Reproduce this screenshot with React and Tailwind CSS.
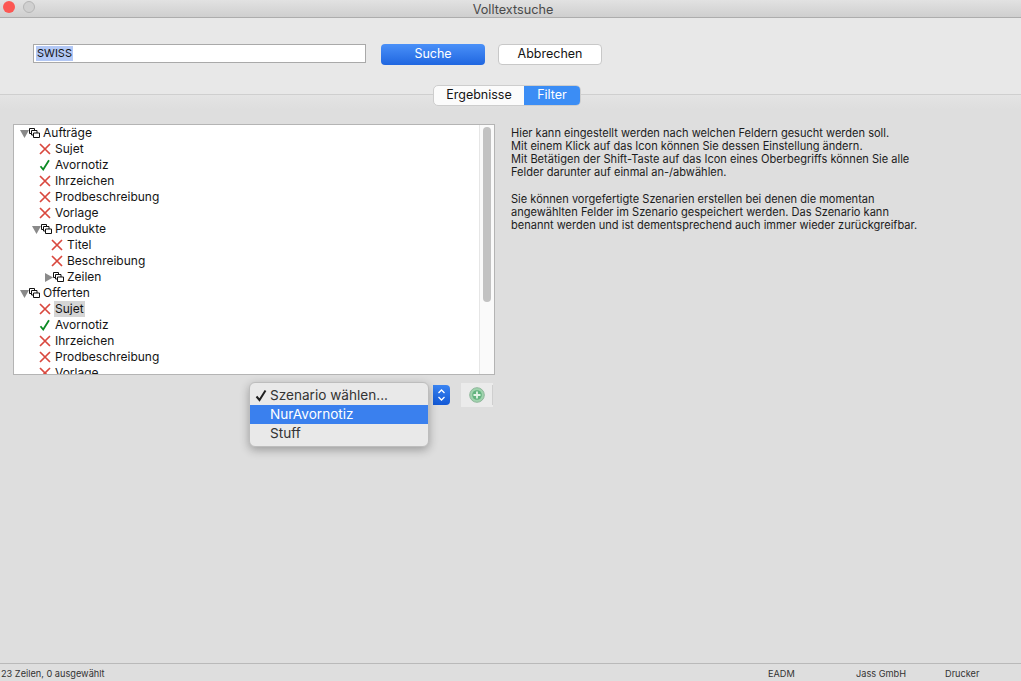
import React from "react";

const FONT = { fontFamily: "Inter, 'Liberation Sans', sans-serif" };

const TREE = [
  { label: "Aufträge", level: 0, kind: "open" },
  { label: "Sujet", level: 1, kind: "x" },
  { label: "Avornotiz", level: 1, kind: "check" },
  { label: "Ihrzeichen", level: 1, kind: "x" },
  { label: "Prodbeschreibung", level: 1, kind: "x" },
  { label: "Vorlage", level: 1, kind: "x" },
  { label: "Produkte", level: 1, kind: "open" },
  { label: "Titel", level: 2, kind: "x" },
  { label: "Beschreibung", level: 2, kind: "x" },
  { label: "Zeilen", level: 2, kind: "closed" },
  { label: "Offerten", level: 0, kind: "open" },
  { label: "Sujet", level: 1, kind: "x", selected: true },
  { label: "Avornotiz", level: 1, kind: "check" },
  { label: "Ihrzeichen", level: 1, kind: "x" },
  { label: "Prodbeschreibung", level: 1, kind: "x" },
  { label: "Vorlage", level: 1, kind: "x" },
];

function CrossIcon() {
  return (
    <svg width="12" height="12" viewBox="0 0 12 12" className="shrink-0">
      <path d="M1 1 L11 11 M11 1 L1 11" stroke="#d9483e" strokeWidth="1.7" fill="none" />
    </svg>
  );
}

function CheckIcon() {
  return (
    <svg width="12" height="12" viewBox="0 0 12 12" className="shrink-0">
      <path d="M1.5 7.2 L4.2 10.5 L10 1.2" stroke="#0b8a22" strokeWidth="1.8" fill="none" />
    </svg>
  );
}

function GroupIcon() {
  return (
    <svg width="11" height="10" viewBox="0 0 11 10" className="shrink-0">
      <path d="M0.5 0.5 H5.5 V2.5 M0.5 0.5 V5.5 H2.5 M2.5 2.5 H8 V5 M2.5 2.5 V7 H4.5 M4.5 5 H10.5 V9.5 H4.5 Z" stroke="#111" strokeWidth="1" fill="none" />
    </svg>
  );
}

function Arrow({ open }) {
  return (
    <svg width="9" height="9" viewBox="0 0 9 9" className="shrink-0">
      {open ? <path d="M0 1 H9 L4.5 9 Z" fill="#8a8a8a" /> : <path d="M1 0 V9 L9 4.5 Z" fill="#8a8a8a" />}
    </svg>
  );
}

function TreeRow({ row }) {
  const isGroup = row.kind === "open" || row.kind === "closed";
  // indent: 12px per level
  const indent = ["pl-[6px]", "pl-[18px]", "pl-[30px]"][row.level];
  return (
    <div className={`flex h-4 shrink-0 items-center ${indent}`}>
      {isGroup ? (
        <>
          <Arrow open={row.kind === "open"} />
          <GroupIcon />
          <span className="ml-[3px]">{row.label}</span>
        </>
      ) : (
        <>
          <span className="ml-[7px] flex w-3 justify-center">
            {row.kind === "x" ? <CrossIcon /> : <CheckIcon />}
          </span>
          <span className={`ml-[3px] h-4 px-px leading-4 ${row.selected ? "bg-[#d5d5d5]" : ""}`}>{row.label}</span>
        </>
      )}
    </div>
  );
}

export default function App() {
  return (
    <div className="relative flex h-[681px] w-[1021px] flex-col overflow-hidden bg-[#dedede] text-[#141414]" style={FONT}>
      {/* title bar */}
      <div className="grid h-[18px] shrink-0 grid-cols-[1fr_auto_1fr] items-center border-b border-[#adadad] bg-gradient-to-b from-[#e2e2e2] to-[#cfcfcf] pl-[3px]">
        <div className="flex gap-2 self-start pt-px">
          <span className="h-3 w-3 rounded-full bg-[#fc5753]" />
          <span className="h-3 w-3 rounded-full border border-[#b5b5b5] bg-[#d0d0d0]" />
        </div>
        <span className="pl-[2px] text-[12.7px] text-[#4a4a4a]">Volltextsuche</span>
        <span />
      </div>

      {/* search area */}
      <div className="flex h-[77px] shrink-0 items-start gap-[15px] border-b border-[#cfcfcf] bg-[#e8e8e8] pl-[33px] pt-[26px]">
        <div className="flex h-[19px] w-[333px] items-center border border-[#a9a9a9] bg-white pl-[2px] text-[11px]">
          <span className="bg-[#b3c8f5] px-px leading-[15px]">SWISS</span>
        </div>
        <button className="h-[21px] w-[104px] rounded-[4px] bg-gradient-to-b from-[#4a90f8] to-[#1f66e0] text-[12.5px] text-white">
          Suche
        </button>
        <button className="ml-[-2px] h-[21px] w-[104px] rounded-[4px] border border-[#c8c8c8] bg-white text-[12.5px]">
          Abbrechen
        </button>
      </div>

      <div className="flex min-h-0 flex-1 flex-col bg-[linear-gradient(#e4e4e4,#dedede_14px)]">
        {/* tabs sit across the divider */}
        <div className="-mt-[10px] flex h-[21px] shrink-0 justify-center pr-[7px] text-[12.5px]">
          <div className="flex h-[21px] w-[148px] overflow-hidden rounded-[5px] border border-[#cdcdcd] bg-[#fbfbfb]">
            <span className="flex flex-1 items-center justify-center">Ergebnisse</span>
            <span className="flex w-[56px] items-center justify-center bg-[#3b8df5] text-white">Filter</span>
          </div>
        </div>

        {/* main */}
        <div className="flex min-h-0 flex-1 items-start pl-[13px] pt-[18px]">
          <div className="flex w-[482px] flex-col">
            <div className="flex h-[251px] overflow-hidden border border-[#b4b4b4] bg-white">
              <div className="flex min-w-0 flex-1 flex-col overflow-hidden text-[12px]">
                {TREE.map((row, i) => (
                  <TreeRow key={i} row={row} />
                ))}
              </div>
              <div className="flex w-[15px] shrink-0 justify-center border-l border-[#e6e6e6] bg-[#fafafa] pt-[2px]">
                <div className="h-[175px] w-[8px] rounded-full bg-[#c2c2c2]" />
              </div>
            </div>
            <div className="mt-[8px] flex h-6 items-center justify-end pr-[2px]">
              <div className="flex h-[20px] w-[17px] items-center justify-center rounded-r-[4px] bg-gradient-to-b from-[#3a84f2] to-[#1158d6]">
                <svg width="9" height="14" viewBox="0 0 9 14">
                  <path d="M1.5 5 L4.5 2 L7.5 5 M1.5 9 L4.5 12 L7.5 9" stroke="#fff" strokeWidth="1.3" fill="none" />
                </svg>
              </div>
              <div className="ml-[11px] flex h-6 w-[32px] items-center justify-between bg-[#ebebeb] pl-[8px]">
                <svg width="16" height="16" viewBox="0 0 16 16">
                  <circle cx="8" cy="8" r="7.3" fill="#9fd3ad" stroke="#8fb79b" strokeWidth="1" />
                  <circle cx="8" cy="8" r="4.8" fill="#62b37e" />
                  <path d="M8 4.5 V11.5 M4.5 8 H11.5" stroke="#e3f3e6" strokeWidth="1.8" />
                </svg>
                <span className="h-[20px] w-px bg-[#cfcfcf]" />
              </div>
            </div>
          </div>

          <div className="ml-[16px] mt-[3px] text-[11.05px] leading-[13px] text-[#1c1c1c]">
            <p>Hier kann eingestellt werden nach welchen Feldern gesucht werden soll.</p>
            <p>Mit einem Klick auf das Icon können Sie dessen Einstellung ändern.</p>
            <p>Mit Betätigen der Shift-Taste auf das Icon eines Oberbegriffs können Sie alle</p>
            <p>Felder darunter auf einmal an-/abwählen.</p>
            <p className="mt-[14px]">Sie können vorgefertigte Szenarien erstellen bei denen die momentan</p>
            <p>angewählten Felder im Szenario gespeichert werden. Das Szenario kann</p>
            <p>benannt werden und ist dementsprechend auch immer wieder zurückgreifbar.</p>
          </div>
        </div>
      </div>

      {/* status bar */}
      <div className="flex h-[18px] shrink-0 items-center border-t border-[#b9b9b9] pl-[1px] pt-[2px] text-[9.2px] text-[#333]">
        <span className="flex-1">23 Zeilen, 0 ausgewählt</span>
        <span className="w-[88px]">EADM</span>
        <span className="w-[89px]">Jass GmbH</span>
        <span className="w-[76px]">Drucker</span>
      </div>

      {/* open popup menu */}
      <div className="absolute left-[249px] top-[382px] flex h-[65px] w-[180px] flex-col justify-center rounded-[6px] border border-[#bdbdbd] bg-[#e9e9e9] text-[13.6px] text-[#333] shadow-[0_3px_10px_rgba(0,0,0,0.3)]">
        <div className="relative flex h-[19px] items-center pl-[20px]">
          <svg width="12" height="13" viewBox="0 0 12 13" className="absolute left-[5px] top-[3px]">
            <path d="M1.5 7.5 L4.5 11 L10.5 1.5" stroke="#1f1f1f" strokeWidth="2" fill="none" />
          </svg>
          Szenario wählen...
        </div>
        <div className="flex h-[19px] items-center bg-[#3a80ee] pl-[20px] text-white">NurAvornotiz</div>
        <div className="flex h-[19px] items-center pl-[20px]">Stuff</div>
      </div>
    </div>
  );
}
